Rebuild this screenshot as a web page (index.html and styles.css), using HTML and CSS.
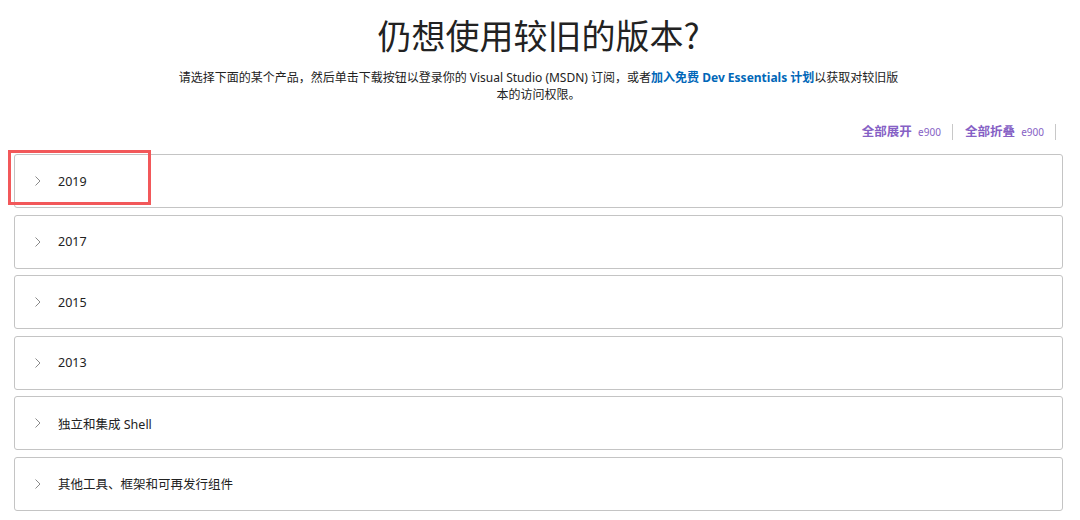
FILE: index.html
```html
<!DOCTYPE html>
<html lang="zh-cn">
<head>
    <meta charset="UTF-8">
    <title>仍想使用较旧的版本？</title>
    <link rel="stylesheet" href="styles.css">
</head>
<body>
    <div id="wrap">
        <h1 class="title">仍想使用较旧的版本?</h1>
        <p class="desc">请选择下面的某个产品，然后单击下载按钮以登录你的 Visual Studio (MSDN) 订阅，或者<a href="javascript:;">加入免费 Dev Essentials 计划</a>以获取对较旧版本的访问权限。</p>

        <div class="tools">
            <a href="javascript:;" class="tool">全部展开 <span class="code">e900</span></a>
            <a href="javascript:;" class="tool">全部折叠 <span class="code">e900</span></a>
        </div>

        <ul class="list">
            <li class="item mark">
                <svg class="arrow" width="6" height="10" viewBox="0 0 6 10"><path d="M0.5 0.5 L5 5 L0.5 9.5" fill="none" stroke="#8a8a8a" stroke-width="1"/></svg>
                <span class="name">2019</span>
            </li>
            <li class="item">
                <svg class="arrow" width="6" height="10" viewBox="0 0 6 10"><path d="M0.5 0.5 L5 5 L0.5 9.5" fill="none" stroke="#8a8a8a" stroke-width="1"/></svg>
                <span class="name">2017</span>
            </li>
            <li class="item">
                <svg class="arrow" width="6" height="10" viewBox="0 0 6 10"><path d="M0.5 0.5 L5 5 L0.5 9.5" fill="none" stroke="#8a8a8a" stroke-width="1"/></svg>
                <span class="name">2015</span>
            </li>
            <li class="item">
                <svg class="arrow" width="6" height="10" viewBox="0 0 6 10"><path d="M0.5 0.5 L5 5 L0.5 9.5" fill="none" stroke="#8a8a8a" stroke-width="1"/></svg>
                <span class="name">2013</span>
            </li>
            <li class="item">
                <svg class="arrow" width="6" height="10" viewBox="0 0 6 10"><path d="M0.5 0.5 L5 5 L0.5 9.5" fill="none" stroke="#8a8a8a" stroke-width="1"/></svg>
                <span class="name">独立和集成 Shell</span>
            </li>
            <li class="item">
                <svg class="arrow" width="6" height="10" viewBox="0 0 6 10"><path d="M0.5 0.5 L5 5 L0.5 9.5" fill="none" stroke="#8a8a8a" stroke-width="1"/></svg>
                <span class="name">其他工具、框架和可再发行组件</span>
            </li>
        </ul>
    </div>
</body>
</html>
```

FILE: styles.css
```css
* {
    margin: 0;
    padding: 0;
}
body {
    font-family: "Segoe UI", "Noto Sans", "Noto Sans CJK SC", sans-serif;
    color: #222;
    background: #fff;
}
#wrap {
    padding: 0 17px 0 14px;
}
.title {
    font-family: "Noto Sans CJK SC", sans-serif;
    font-weight: 400;
    font-size: 34px;
    line-height: 50px;
    text-align: center;
    color: #222;
    margin-top: 10px;
}
.desc {
    width: 724px;
    margin: 9px auto 0;
    font-size: 12px;
    line-height: 17px;
    text-align: center;
    color: #222;
}
.desc a {
    color: #0067b8;
    font-weight: 700;
    text-decoration: none;
}
.tools {
    display: flex;
    justify-content: flex-end;
    margin-top: 21px;
    padding-right: 7px;
}
.tool {
    font-size: 12.5px;
    font-weight: 700;
    color: #8661c5;
    text-decoration: none;
    line-height: 16px;
    padding: 0 11px 0 12px;
    border-right: 1px solid #c8c8c8;
}
.tool .code {
    font-size: 10px;
    font-weight: 400;
    margin-left: 3px;
}
.list {
    list-style: none;
    margin-top: 14px;
    display: flex;
    flex-direction: column;
    gap: 6.5px;
}
.item {
    position: relative;
    height: 52px;
    border: 1px solid #c4c4c4;
    border-radius: 3px;
    display: flex;
    align-items: center;
    font-size: 12.5px;
    color: #222;
}
.item .arrow {
    margin: 0 17px 0 20px;
}
.item.mark::after {
    content: "";
    position: absolute;
    left: -7px;
    top: -5px;
    width: 137px;
    height: 49px;
    border: 3px solid #f2585a;
}
```
